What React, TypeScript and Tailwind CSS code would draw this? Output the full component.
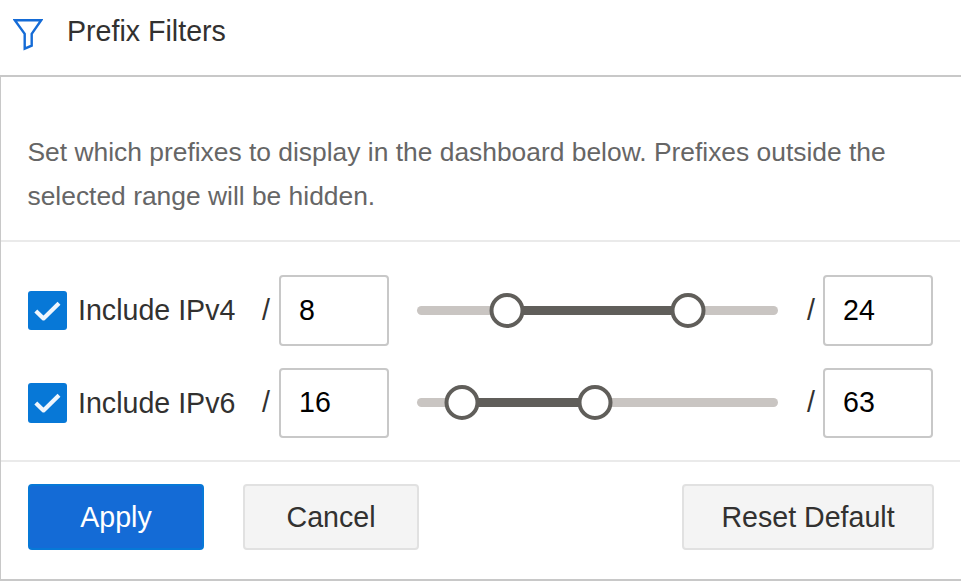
import { useState } from "react";

type RangeRowProps = {
  label: string;
  max: number;
  low: number;
  high: number;
};

function FilterIcon() {
  return (
    <svg width="30" height="33" viewBox="0 0 30 33" fill="none" className="block">
      <path
        d="M1.8 2.2H28.2L18.7 15.8V27.6L11.7 30.6V15.8Z"
        stroke="#146bd6"
        strokeWidth="2.4"
      />
    </svg>
  );
}

function Checkbox({ checked, onChange }: { checked: boolean; onChange: () => void }) {
  return (
    <button
      role="checkbox"
      aria-checked={checked}
      onClick={onChange}
      className="h-[39.5px] w-[39px] shrink-0 rounded-[3px] bg-[#0778d7]"
    >
      {checked && (
        <svg width="39" height="39" viewBox="0 0 39 39" fill="none" className="block">
          <path
            d="M7.8 20L15.5 27.4L31 12.2"
            stroke="#eff6fd"
            strokeWidth="4.2"
            strokeLinejoin="round"
          />
        </svg>
      )}
    </button>
  );
}

function PrefixInput({ value, onChange }: { value: number; onChange: (v: number) => void }) {
  return (
    <input
      value={value}
      onChange={(e) => onChange(Number(e.target.value))}
      className="h-full w-[110px] shrink-0 rounded-[4px] border-2 border-[#c8c8c8] bg-white px-[18px] text-[28.6px] text-black outline-none"
    />
  );
}

function RangeSlider({ low, high, max }: { low: number; high: number; max: number }) {
  const start = (low / max) * 100;
  const end = (high / max) * 100;

  return (
    <div className="relative ml-7 h-[9px] w-[361px] shrink-0 rounded-full bg-[#c9c5c2]">
      <div
        className="absolute top-0 h-full bg-[#605e5a]"
        style={{ left: `${start}%`, width: `${end - start}%` }}
      />
      {[start, end].map((pos, i) => (
        <div
          key={i}
          className="absolute -top-[13px] h-[35px] w-[35px] -translate-x-1/2 rounded-full border-4 border-[#605e5a] bg-white"
          style={{ left: `${pos}%` }}
        />
      ))}
    </div>
  );
}

function RangeRow({ label, max, low, high }: RangeRowProps) {
  const [checked, setChecked] = useState(true);
  const [from, setFrom] = useState(low);
  const [to, setTo] = useState(high);

  return (
    <div className="flex flex-1 items-center">
      <Checkbox checked={checked} onChange={() => setChecked(!checked)} />
      <span className="ml-[11px] w-[184px] shrink-0 whitespace-nowrap pt-px">{label}</span>
      <span className="w-[17px] shrink-0">/</span>
      <PrefixInput value={from} onChange={setFrom} />
      <RangeSlider low={from} high={to} max={max} />
      <span className="ml-[29px] w-[16px] shrink-0">/</span>
      <PrefixInput value={to} onChange={setTo} />
    </div>
  );
}

export default function App() {
  return (
    <main className="flex h-[581px] w-[961px] flex-col overflow-hidden bg-white font-['Liberation_Sans',Arial,sans-serif] text-[28.6px] text-[#323130]">
      {/* Header */}
      <header className="flex h-[75px] shrink-0 pl-[13px]">
        <div className="pt-[18px]">
          <FilterIcon />
        </div>
        <h1 className="ml-6 pt-[11px] leading-10">Prefix Filters</h1>
      </header>

      <section className="flex flex-1 flex-col border-y-2 border-l border-[#c8c8c8] pr-px">
        <p className="h-[165px] shrink-0 border-b-2 border-[#eaeaea] pl-[26.5px] pt-[53px] text-[26.4px] leading-[44px] text-[#666666]">
          Set which prefixes to display in the dashboard below. Prefixes outside the
          <br />
          selected range will be hidden.
        </p>

        {/* Prefix ranges */}
        <div className="flex h-[220px] shrink-0 flex-col gap-[22px] border-b-2 border-[#eaeaea] pl-[27px] pt-[33px] pb-[22px]">
          <RangeRow label="Include IPv4" max={32} low={8} high={24} />
          <RangeRow label="Include IPv6" max={128} low={16} high={63} />
        </div>

        {/* Actions */}
        <div className="flex pl-[27px] pr-[26px] pt-[22px]">
          <button className="h-[66px] w-[176px] rounded-[4px] border-2 border-[#0778d7] bg-[#146bd6] text-white">
            Apply
          </button>
          <button className="ml-[39px] h-[66px] w-[176px] rounded-[4px] border-2 border-[#e1e1e1] bg-[#f4f4f4]">
            Cancel
          </button>
          <button className="ml-auto h-[66px] w-[252px] rounded-[4px] border-2 border-[#e1e1e1] bg-[#f4f4f4]">
            Reset Default
          </button>
        </div>
      </section>
    </main>
  );
}
